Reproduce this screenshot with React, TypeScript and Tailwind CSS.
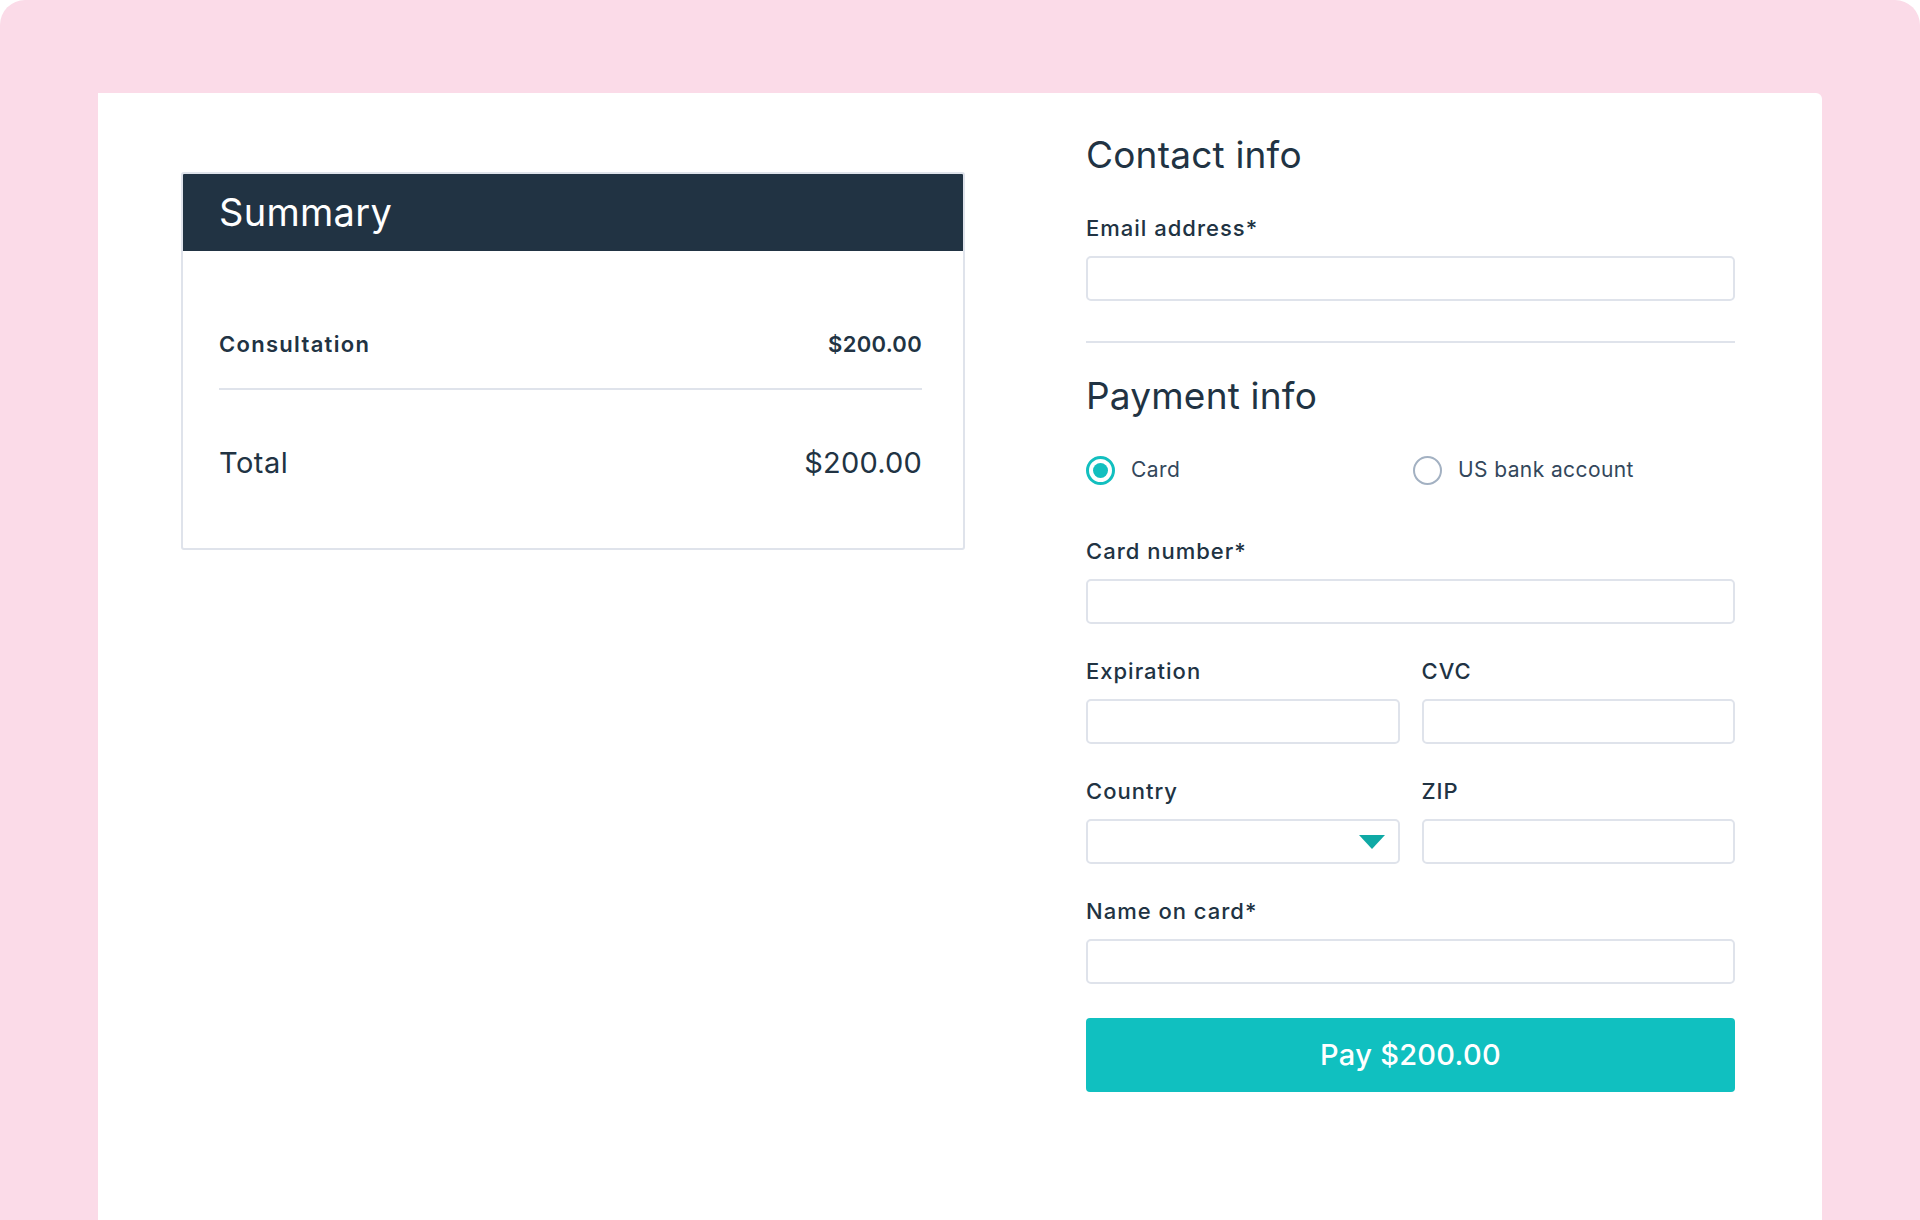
import React from "react";

const font = { fontFamily: "Inter, 'Noto Sans', sans-serif" };

function Label({ children }: { children: React.ReactNode }) {
  return (
    <div className="mb-[14px] text-[22px] font-medium leading-[28px] tracking-[1px] text-[#213343]">
      {children}
    </div>
  );
}

function Input() {
  return <div className="h-[45px] w-full rounded-[5px] border-2 border-[#dfe3eb] bg-white" />;
}

export default function App() {
  return (
    <div className="min-h-[1220px] bg-white" style={font}>
      <div className="h-[1220px] overflow-hidden rounded-t-[25px] bg-[#fbdbe8] px-[98px] pt-[93px]">
        <div className="flex h-full rounded-tr-[6px] bg-white">
          {/* Summary */}
          <div className="pl-[83px] pt-[79px]">
            <div className="w-[784px] overflow-hidden rounded-[3px] border-2 border-[#dfe3eb]">
              <div className="flex h-[77px] items-center bg-[#213343] px-[36px] text-[38px] font-normal tracking-[0.3px] text-white">
                Summary
              </div>
              <div className="pb-[64px] pl-[36px] pr-[41px] pt-[72px]">
                <div className="flex h-[42px] items-center justify-between text-[22px] font-semibold text-[#213343]">
                  <span className="tracking-[1.3px]">Consultation</span>
                  <span className="tracking-[0.3px]">$200.00</span>
                </div>
                <div className="mt-[23px] h-[2px] bg-[#dfe3eb]" />
                <div className="mt-[52px] flex h-[42px] items-center justify-between text-[29px] font-normal text-[#213343]">
                  <span className="tracking-[0.5px]">Total</span>
                  <span className="tracking-[0.2px]">$200.00</span>
                </div>
              </div>
            </div>
          </div>

          {/* Form */}
          <div className="ml-[121px] w-[649px] pt-[42px] text-[#213343]">
            <div className="text-[37px] font-normal leading-[40px] tracking-[0.2px]">Contact info</div>
            <div className="mt-[39px]">
              <Label>Email address*</Label>
              <Input />
            </div>
            <div className="mt-[40px] h-[2px] bg-[#dfe3eb]" />
            <div className="mt-[33px] text-[37px] font-normal leading-[40px] tracking-[0.2px]">Payment info</div>

            <div className="mt-[39px] flex h-[30px] items-center">
              <div className="flex w-[327px] items-center">
                <div className="flex h-[29px] w-[29px] items-center justify-center rounded-full border-[3px] border-[#12bfbf]">
                  <div className="h-[15px] w-[15px] rounded-full bg-[#12bfbf]" />
                </div>
                <span className="ml-[16px] text-[21px] tracking-[0.4px] text-[#33475b]">Card</span>
              </div>
              <div className="flex items-center">
                <div className="h-[29px] w-[29px] rounded-full border-2 border-[#a3b1c2]" />
                <span className="ml-[16px] text-[21px] tracking-[0.4px] text-[#33475b]">US bank account</span>
              </div>
            </div>

            <div className="mt-[52px] flex flex-col gap-[33px]">
              <div>
                <Label>Card number*</Label>
                <Input />
              </div>
              <div className="grid grid-cols-2 gap-x-[22px]">
                <div>
                  <Label>Expiration</Label>
                  <Input />
                </div>
                <div>
                  <Label>CVC</Label>
                  <Input />
                </div>
              </div>
              <div className="grid grid-cols-2 gap-x-[22px]">
                <div>
                  <Label>Country</Label>
                  <div className="flex h-[45px] w-full items-center justify-end rounded-[5px] border-2 border-[#dfe3eb] bg-white pr-[13px]">
                    <svg width="26" height="14" viewBox="0 0 26 14">
                      <path d="M0 0 H26 L13 14 Z" fill="#0fa9a5" />
                    </svg>
                  </div>
                </div>
                <div>
                  <Label>ZIP</Label>
                  <Input />
                </div>
              </div>
              <div>
                <Label>Name on card*</Label>
                <Input />
              </div>
            </div>

            <button className="mt-[34px] flex h-[74px] w-full items-center justify-center rounded-[4px] bg-[#10c0c0] text-[29px] font-medium tracking-[0.3px] text-white">
              Pay $200.00
            </button>
          </div>
        </div>
      </div>
    </div>
  );
}
